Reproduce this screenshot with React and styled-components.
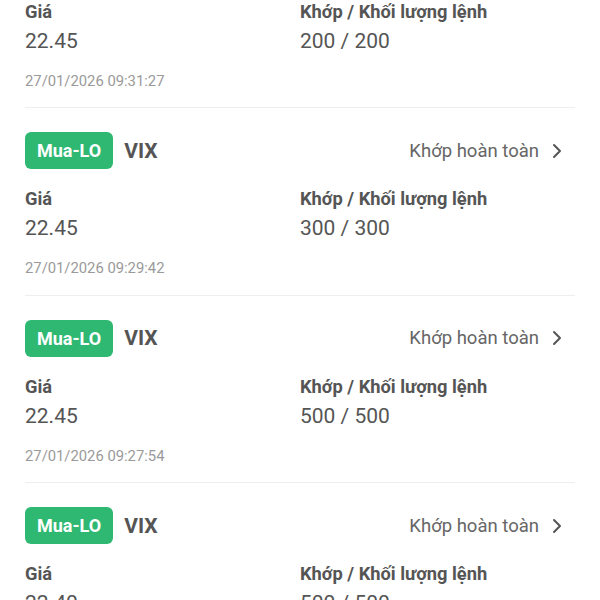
import React from "react";
import styled, { createGlobalStyle } from "styled-components";

const GlobalStyle = createGlobalStyle`
  html, body {
    margin: 0;
    padding: 0;
    background: #ffffff;
    font-family: Roboto, "Noto Sans", "Liberation Sans", sans-serif;
    overflow: hidden;
  }
`;

const List = styled.div`
  margin-top: -79.5px;
  padding: 0 25px;
`;

const Card = styled.div`
  padding: 24px 0 16.5px;
  border-bottom: 1px solid #eeeeee;
`;

const Header = styled.div`
  display: flex;
  align-items: center;
  height: 37px;
  margin-bottom: 18px;
`;

const Badge = styled.span`
  display: inline-flex;
  align-items: center;
  justify-content: center;
  height: 37px;
  padding: 0 12px;
  border-radius: 6px;
  background: #2eb872;
  color: #ffffff;
  font-size: 18px;
  font-weight: 700;
`;

const Symbol = styled.span`
  margin-left: 11px;
  font-size: 21px;
  font-weight: 700;
  color: #555555;
`;

const Status = styled.span`
  margin-left: auto;
  display: flex;
  align-items: center;
  gap: 12px;
  font-size: 18.5px;
  color: #666666;
  padding-right: 12px;
`;

const Grid = styled.div`
  display: grid;
  grid-template-columns: 275px 1fr;
`;

const Label = styled.div`
  font-size: 18.3px;
  font-weight: 700;
  line-height: 24px;
  color: #555555;
`;

const Value = styled.div`
  margin-top: 4px;
  font-size: 21px;
  line-height: 26px;
  color: #555555;
`;

const Time = styled.div`
  margin-top: 17px;
  font-size: 14.8px;
  line-height: 20px;
  color: #9a9a9a;
`;

const Chevron = () => (
  <svg width="12" height="16" viewBox="0 0 12 16" fill="none">
    <path d="M3 2l6 6-6 6" stroke="#555" strokeWidth="2" strokeLinecap="round" strokeLinejoin="round" />
  </svg>
);

const orders = [
  { price: "22.45", qty: "200 / 200", time: "27/01/2026 09:31:27" },
  { price: "22.45", qty: "300 / 300", time: "27/01/2026 09:29:42" },
  { price: "22.45", qty: "500 / 500", time: "27/01/2026 09:27:54" },
  { price: "22.40", qty: "500 / 500", time: "27/01/2026 09:26:10" },
];

export default function App() {
  return (
    <>
      <GlobalStyle />
      <List>
        {orders.map((o, i) => (
          <Card key={i}>
            <Header>
              <Badge>Mua-LO</Badge>
              <Symbol>VIX</Symbol>
              <Status>
                Khớp hoàn toàn
                <Chevron />
              </Status>
            </Header>
            <Grid>
              <div>
                <Label>Giá</Label>
                <Value>{o.price}</Value>
              </div>
              <div>
                <Label>Khớp / Khối lượng lệnh</Label>
                <Value>{o.qty}</Value>
              </div>
            </Grid>
            <Time>{o.time}</Time>
          </Card>
        ))}
      </List>
    </>
  );
}
